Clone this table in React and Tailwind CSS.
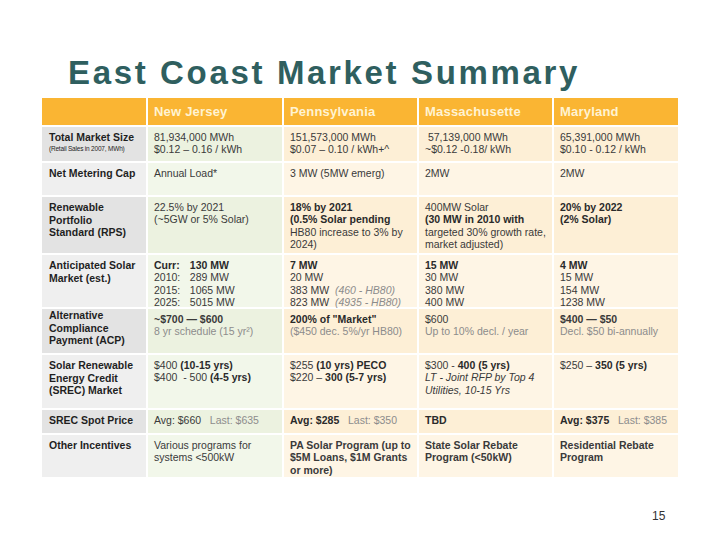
import React from "react";

const GRAY_DARK = "bg-[#e3e3e3]";
const GRAY_LIGHT = "bg-[#efefef]";
const GREEN_DARK = "bg-[#ecf2e0]";
const GREEN_LIGHT = "bg-[#f2f7ea]";
const CREAM_DARK = "bg-[#fdefd6]";
const CREAM_LIGHT = "bg-[#fef5e5]";

const B = ({ children }) => <span className="font-bold text-[#2a2a2a]">{children}</span>;
const L = ({ children }) => <span className="text-[#8c8c8c]">{children}</span>;
const I = ({ children }) => <span className="italic">{children}</span>;

const states = ["New Jersey", "Pennsylvania", "Massachusette", "Maryland"];

// each row: label, then 4 state cells
const rows = [
  {
    label: (
      <>
        <div className="whitespace-nowrap">
          Total Market <span className="font-semibold">Size</span>
        </div>
        <div className="text-[6.5px] leading-[9px] font-normal tracking-[-0.2px] whitespace-nowrap">(Retail Sales in 2007, MWh)</div>
      </>
    ),
    cells: [
      <>81,934,000 MWh<br />$0.12 – 0.16 / kWh</>,
      <>151,573,000 MWh<br />$0.07 – 0.10 / kWh+^</>,
      <>&nbsp;57,139,000 MWh<br />~$0.12 -0.18/ kWh</>,
      <>65,391,000 MWh<br />$0.10 - 0.12 / kWh</>
    ]
  },
  {
    label: <span className="whitespace-nowrap">Net Metering Cap</span>,
    cells: [<>Annual Load*</>, <>3 MW (5MW emerg)</>, <>2MW</>, <>2MW</>]
  },
  {
    label: <>Renewable<br />Portfolio<br />Standard (RPS)</>,
    cells: [
      <>22.5% by 2021<br />(~5GW or 5% Solar)</>,
      <><B>18% by 2021</B><br /><B>(0.5% Solar pending</B><br />HB80 increase to 3% by 2024)</>,
      <>400MW Solar<br /><B>(30 MW in 2010 with</B><br />targeted 30% growth rate, market adjusted)</>,
      <><B>20% by 2022</B><br /><B>(2% Solar)</B></>
    ]
  },
  {
    label: <>Anticipated Solar<br />Market (est.)</>,
    cells: [
      <>
        <div className="flex"><span className="w-[30px] font-bold text-[#2a2a2a]">Curr:</span><B>&nbsp;&nbsp;130 MW</B></div>
        <div className="flex"><span className="w-[30px]">2010:</span>&nbsp;&nbsp;289 MW</div>
        <div className="flex"><span className="w-[30px]">2015:</span>&nbsp;&nbsp;1065 MW</div>
        <div className="flex"><span className="w-[30px]">2025:</span>&nbsp;&nbsp;5015 MW</div>
      </>,
      <><B>7 MW</B><br />20 MW<br />383 MW&nbsp;&nbsp;<I><L>(460 - HB80)</L></I><br />823 MW&nbsp;&nbsp;<I><L>(4935 - HB80)</L></I></>,
      <><B>15 MW</B><br />30 MW<br />380 MW<br />400 MW</>,
      <><B>4 MW</B><br />15 MW<br />154 MW<br />1238 MW</>
    ]
  },
  {
    label: <>Alternative<br />Compliance<br />Payment (ACP)</>,
    labelPad: "pt-0",
    cells: [
      <><span className="font-semibold">~$700 — $600</span><br /><L>8 yr schedule (15 yr²)</L></>,
      <><B>200% of "Market"</B><br /><L>($450 dec. 5%/yr HB80)</L></>,
      <>$600<br /><L>Up to 10% decl. / year</L></>,
      <><span className="font-semibold">$400 — $50</span><br /><L>Decl. $50 bi-annually</L></>
    ]
  },
  {
    label: <>Solar Renewable<br />Energy Credit<br />(SREC) Market</>,
    cells: [
      <>$400 <B>(10-15 yrs)</B><br />$400&nbsp;&nbsp;- 500 <B>(4-5 yrs)</B></>,
      <>$255 <B>(10 yrs) PECO</B><br />$220 – <B>300 (5-7 yrs)</B></>,
      <>$300 - <B>400 (5 yrs)</B><br /><I>LT - Joint RFP by Top 4 Utilities, 10-15 Yrs</I></>,
      <>$250 – <B>350 (5 yrs)</B></>
    ]
  },
  {
    label: <span className="whitespace-nowrap">SREC Spot Price</span>,
    nowrap: true,
    cells: [
      <>Avg: $660&nbsp;&nbsp;&nbsp;<L>Last: $635</L></>,
      <><B>Avg: $285</B>&nbsp;&nbsp;&nbsp;<L>Last: $350</L></>,
      <><B>TBD</B></>,
      <><B>Avg: $375</B>&nbsp;&nbsp;&nbsp;<L>Last: $385</L></>
    ]
  },
  {
    label: <span className="whitespace-nowrap"><span className="font-semibold">Other</span> Incentives</span>,
    cells: [
      <>Various programs for systems &lt;500kW</>,
      <><span className="font-semibold">PA Solar Program (up to $5M Loans, $1M Grants or more)</span></>,
      <><span className="font-semibold">State Solar Rebate Program (&lt;50kW)</span></>,
      <><span className="font-semibold">Residential Rebate Program</span></>
    ]
  }
];

export default function App() {
  return (
    <div className="w-[720px] h-[540px] bg-white overflow-hidden" style={{ fontFamily: "'Liberation Sans', Arial, sans-serif" }}>
      <div className="pt-[56px] pl-[68px]">
        <h1 className="text-[33px] leading-[33px] font-bold tracking-[2.65px] text-[#2f5f5f]">East Coast Market Summary</h1>
      </div>

      <div
        className="ml-[42px] mt-[9px] grid gap-[2px] bg-white"
        style={{
          gridTemplateColumns: "104px 134px 133px 133px 124px",
          gridTemplateRows: "27px 34px 32px 56px 52px 44px 53px 23px 42px"
        }}
      >
        <div className="bg-[#fab533]" />
        {states.map((s) => (
          <div key={s} className="bg-[#fab533] flex items-center px-[6px] text-[13px] font-bold text-[#fff3d2] tracking-[0.2px]">
            {s}
          </div>
        ))}

        {rows.map((r, i) => {
          const even = i % 2 === 0;
          return (
            <React.Fragment key={i}>
              <div
                className={`${even ? GRAY_DARK : GRAY_LIGHT} ${r.labelPad || "pt-[4px]"} px-[7px] text-[10.5px] leading-[12.5px] font-bold text-[#1f1f1f]`}
              >
                {r.label}
              </div>
              {r.cells.map((c, j) => (
                <div
                  key={j}
                  className={`${j === 0 ? (even ? GREEN_DARK : GREEN_LIGHT) : even ? CREAM_DARK : CREAM_LIGHT} ${r.nowrap ? "whitespace-nowrap" : ""} pt-[4px] px-[6px] text-[10.5px] leading-[12.3px] text-[#3a3a3a]`}
                >
                  {c}
                </div>
              ))}
            </React.Fragment>
          );
        })}
      </div>

      <div className="mt-[32px] ml-[652px] text-[12px] leading-[14px] text-[#333]">15</div>
    </div>
  );
}
